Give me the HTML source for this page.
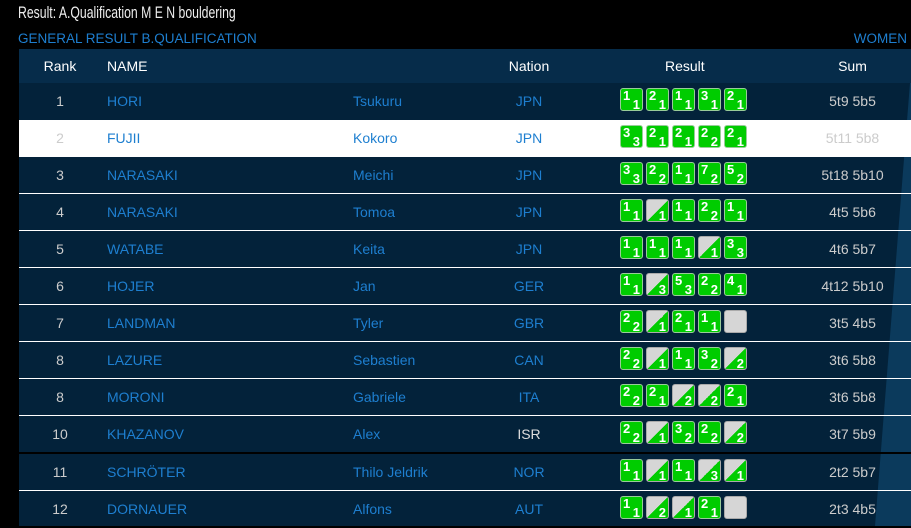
<!DOCTYPE html>
<html><head><meta charset="utf-8"><style>
*{margin:0;padding:0;box-sizing:border-box}
body{width:911px;height:526px;background:#000;position:relative;overflow:hidden;font-family:"Liberation Sans",Arial,sans-serif}
.title{position:absolute;left:18px;top:3px;color:#eee;font-size:17px;transform:scaleX(.72);transform-origin:left top;white-space:nowrap}
.sub{position:absolute;left:18px;top:31px;color:#1e7fd0;font-size:13.5px}
.women{position:absolute;right:4px;top:31px;color:#1e7fd0;font-size:13.5px}
.tbl{position:absolute;left:19px;top:49px;width:892px;height:477px;background:#03223a}
.deco{position:absolute;left:860px;top:83px;width:60px;height:443px;background:#0b3a5c;clip-path:polygon(50px 0,60px 0,60px 443px,15px 443px)}
.hdr{position:absolute;left:19px;top:49px;width:892px;height:34px;background:#062c4a;color:#fff;font-size:14px}
.row{position:absolute;left:19px;width:892px;height:37px;font-size:14px;color:#ccc}
.row.w{background:#fff;color:#ccc}
.sep{position:absolute;left:19px;width:892px;height:1px;background:#fff}
.c{position:absolute;top:10px;white-space:nowrap}
.rk{left:0;width:82px;text-align:center}
.nm{left:88px;color:#1e7fd0}
.fn{left:334px;color:#1e7fd0}
.na{left:470px;width:80px;text-align:center;color:#1e7fd0}
.sm{left:770px;width:127px;text-align:center}
.bx{position:absolute;top:5px;left:601px}
.b{position:absolute;width:23px;height:23px;border-radius:3px;border:1px solid #9c9;background:#0c0;color:#fff;font-size:13px;font-weight:bold}
.b.h{background:linear-gradient(to bottom right,#d6d6d6 50%,#0c0 50%);border-color:#aaa}
.b.e{background:#d6d6d6;border-color:#aaa}
.t{position:absolute;left:2px;top:-1px}
.u{position:absolute;right:2px;bottom:-2px}
</style></head><body>
<div class="title">Result: A.Qualification M E N bouldering</div>
<div class="sub">GENERAL RESULT B.QUALIFICATION</div>
<div class="women">WOMEN</div>
<div class="tbl"></div>
<div class="deco"></div>
<div class="hdr">
<div class="c rk" style="top:9px">Rank</div>
<div class="c" style="left:88px;top:9px">NAME</div>
<div class="c" style="left:470px;width:80px;text-align:center;top:9px">Nation</div>
<div class="c" style="left:646px;top:9px">Result</div>
<div class="c sm" style="top:9px;color:#fff">Sum</div>
</div>

<div class="row" style="top:83px"><div class="c rk">1</div><div class="c nm">HORI</div><div class="c fn">Tsukuru</div><div class="c na">JPN</div><div class="bx">
<div class="b" style="left:0"><span class="t">1</span><span class="u">1</span></div><div class="b" style="left:26px"><span class="t">2</span><span class="u">1</span></div><div class="b" style="left:52px"><span class="t">1</span><span class="u">1</span></div><div class="b" style="left:78px"><span class="t">3</span><span class="u">1</span></div><div class="b" style="left:104px"><span class="t">2</span><span class="u">1</span></div></div><div class="c sm">5t9 5b5</div></div>

<div class="row w" style="top:120px"><div class="c rk">2</div><div class="c nm">FUJII</div><div class="c fn">Kokoro</div><div class="c na">JPN</div><div class="bx">
<div class="b" style="left:0"><span class="t">3</span><span class="u">3</span></div><div class="b" style="left:26px"><span class="t">2</span><span class="u">1</span></div><div class="b" style="left:52px"><span class="t">2</span><span class="u">1</span></div><div class="b" style="left:78px"><span class="t">2</span><span class="u">2</span></div><div class="b" style="left:104px"><span class="t">2</span><span class="u">1</span></div></div><div class="c sm">5t11 5b8</div></div>

<div class="row" style="top:157px"><div class="c rk">3</div><div class="c nm">NARASAKI</div><div class="c fn">Meichi</div><div class="c na">JPN</div><div class="bx">
<div class="b" style="left:0"><span class="t">3</span><span class="u">3</span></div><div class="b" style="left:26px"><span class="t">2</span><span class="u">2</span></div><div class="b" style="left:52px"><span class="t">1</span><span class="u">1</span></div><div class="b" style="left:78px"><span class="t">7</span><span class="u">2</span></div><div class="b" style="left:104px"><span class="t">5</span><span class="u">2</span></div></div><div class="c sm">5t18 5b10</div></div>

<div class="row" style="top:194px"><div class="c rk">4</div><div class="c nm">NARASAKI</div><div class="c fn">Tomoa</div><div class="c na">JPN</div><div class="bx">
<div class="b" style="left:0"><span class="t">1</span><span class="u">1</span></div><div class="b h" style="left:26px"><span class="u">1</span></div><div class="b" style="left:52px"><span class="t">1</span><span class="u">1</span></div><div class="b" style="left:78px"><span class="t">2</span><span class="u">2</span></div><div class="b" style="left:104px"><span class="t">1</span><span class="u">1</span></div></div><div class="c sm">4t5 5b6</div></div>

<div class="row" style="top:231px"><div class="c rk">5</div><div class="c nm">WATABE</div><div class="c fn">Keita</div><div class="c na">JPN</div><div class="bx">
<div class="b" style="left:0"><span class="t">1</span><span class="u">1</span></div><div class="b" style="left:26px"><span class="t">1</span><span class="u">1</span></div><div class="b" style="left:52px"><span class="t">1</span><span class="u">1</span></div><div class="b h" style="left:78px"><span class="u">1</span></div><div class="b" style="left:104px"><span class="t">3</span><span class="u">3</span></div></div><div class="c sm">4t6 5b7</div></div>

<div class="row" style="top:268px"><div class="c rk">6</div><div class="c nm">HOJER</div><div class="c fn">Jan</div><div class="c na">GER</div><div class="bx">
<div class="b" style="left:0"><span class="t">1</span><span class="u">1</span></div><div class="b h" style="left:26px"><span class="u">3</span></div><div class="b" style="left:52px"><span class="t">5</span><span class="u">3</span></div><div class="b" style="left:78px"><span class="t">2</span><span class="u">2</span></div><div class="b" style="left:104px"><span class="t">4</span><span class="u">1</span></div></div><div class="c sm">4t12 5b10</div></div>

<div class="row" style="top:305px"><div class="c rk">7</div><div class="c nm">LANDMAN</div><div class="c fn">Tyler</div><div class="c na">GBR</div><div class="bx">
<div class="b" style="left:0"><span class="t">2</span><span class="u">2</span></div><div class="b h" style="left:26px"><span class="u">1</span></div><div class="b" style="left:52px"><span class="t">2</span><span class="u">1</span></div><div class="b" style="left:78px"><span class="t">1</span><span class="u">1</span></div><div class="b e" style="left:104px"></div></div><div class="c sm">3t5 4b5</div></div>

<div class="row" style="top:342px"><div class="c rk">8</div><div class="c nm">LAZURE</div><div class="c fn">Sebastien</div><div class="c na">CAN</div><div class="bx">
<div class="b" style="left:0"><span class="t">2</span><span class="u">2</span></div><div class="b h" style="left:26px"><span class="u">1</span></div><div class="b" style="left:52px"><span class="t">1</span><span class="u">1</span></div><div class="b" style="left:78px"><span class="t">3</span><span class="u">2</span></div><div class="b h" style="left:104px"><span class="u">2</span></div></div><div class="c sm">3t6 5b8</div></div>

<div class="row" style="top:379px"><div class="c rk">8</div><div class="c nm">MORONI</div><div class="c fn">Gabriele</div><div class="c na">ITA</div><div class="bx">
<div class="b" style="left:0"><span class="t">2</span><span class="u">2</span></div><div class="b" style="left:26px"><span class="t">2</span><span class="u">1</span></div><div class="b h" style="left:52px"><span class="u">2</span></div><div class="b h" style="left:78px"><span class="u">2</span></div><div class="b" style="left:104px"><span class="t">2</span><span class="u">1</span></div></div><div class="c sm">3t6 5b8</div></div>

<div class="row" style="top:416px"><div class="c rk">10</div><div class="c nm">KHAZANOV</div><div class="c fn">Alex</div><div class="c na" style="color:#ddd">ISR</div><div class="bx">
<div class="b" style="left:0"><span class="t">2</span><span class="u">2</span></div><div class="b h" style="left:26px"><span class="u">1</span></div><div class="b" style="left:52px"><span class="t">3</span><span class="u">2</span></div><div class="b" style="left:78px"><span class="t">2</span><span class="u">2</span></div><div class="b h" style="left:104px"><span class="u">2</span></div></div><div class="c sm">3t7 5b9</div></div>

<div class="row" style="top:454px"><div class="c rk">11</div><div class="c nm">SCHRÖTER</div><div class="c fn">Thilo Jeldrik</div><div class="c na">NOR</div><div class="bx">
<div class="b" style="left:0"><span class="t">1</span><span class="u">1</span></div><div class="b h" style="left:26px"><span class="u">1</span></div><div class="b" style="left:52px"><span class="t">1</span><span class="u">1</span></div><div class="b h" style="left:78px"><span class="u">3</span></div><div class="b h" style="left:104px"><span class="u">1</span></div></div><div class="c sm">2t2 5b7</div></div>

<div class="row" style="top:491px"><div class="c rk">12</div><div class="c nm">DORNAUER</div><div class="c fn">Alfons</div><div class="c na">AUT</div><div class="bx">
<div class="b" style="left:0"><span class="t">1</span><span class="u">1</span></div><div class="b h" style="left:26px"><span class="u">2</span></div><div class="b h" style="left:52px"><span class="u">1</span></div><div class="b" style="left:78px"><span class="t">2</span><span class="u">1</span></div><div class="b e" style="left:104px"></div></div><div class="c sm">2t3 4b5</div></div>

<div class="sep" style="top:193px"></div>
<div class="sep" style="top:230px"></div>
<div class="sep" style="top:267px"></div>
<div class="sep" style="top:304px"></div>
<div class="sep" style="top:341px"></div>
<div class="sep" style="top:378px"></div>
<div class="sep" style="top:415px"></div>
<div class="sep" style="top:452px;height:2px;background:#000"></div>
<div class="sep" style="top:490px"></div>
</body></html>
